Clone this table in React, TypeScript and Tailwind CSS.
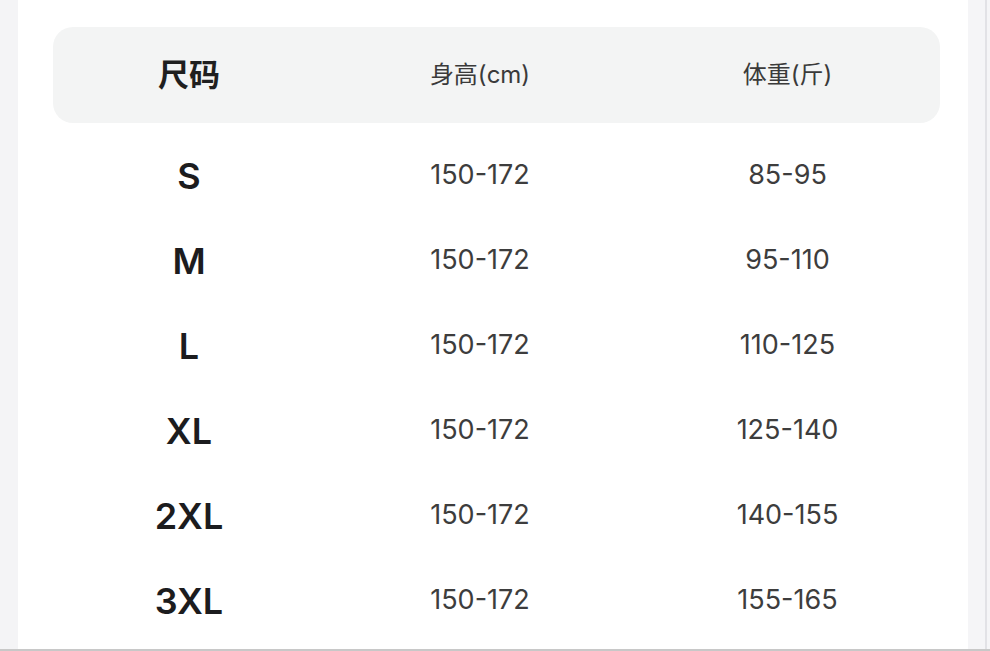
import React from 'react';

const rows = [
  { size: 'S', height: '150-172', weight: '85-95' },
  { size: 'M', height: '150-172', weight: '95-110' },
  { size: 'L', height: '150-172', weight: '110-125' },
  { size: 'XL', height: '150-172', weight: '125-140' },
  { size: '2XL', height: '150-172', weight: '140-155' },
  { size: '3XL', height: '150-172', weight: '155-165' },
];

const cols = 'grid grid-cols-[272px_310px_1fr] items-center text-center';

export default function App() {
  return (
    <div
      className="w-[990px] h-[651px] overflow-hidden flex flex-col bg-white"
      style={{ fontFamily: 'Inter, "Noto Sans CJK SC", sans-serif' }}
    >
      <div className="flex flex-1 min-h-0">
        <div className="w-[18px] bg-[#f4f4f6]" />
        <main className="flex-1 bg-white pl-[35px] pr-[28px] pt-[27px]">
          <div className={`${cols} h-[96px] rounded-[20px] bg-[#f3f4f4]`}>
            <div className="text-[31px] font-bold text-[#1f1f1f]">尺码</div>
            <div className="text-[24px] text-[#3a3a3a]">身高(cm)</div>
            <div className="text-[24px] text-[#3a3a3a]">体重(斤)</div>
          </div>
          <div className="mt-[10px]">
            {rows.map((r) => (
              <div key={r.size} className={`${cols} h-[85px]`}>
                <div className="text-[36px] font-semibold text-[#1c1c1e]">{r.size}</div>
                <div className="text-[27px] text-[#3d3d3d]">{r.height}</div>
                <div className="text-[27px] text-[#3d3d3d]">{r.weight}</div>
              </div>
            ))}
          </div>
        </main>
        <div className="w-[22px] bg-[#f5f5f7] flex justify-end">
          <div className="w-[2px] mr-[3px] bg-[#e2e2e6]" />
        </div>
      </div>
      <div className="h-[2px] bg-[#c8c8c8]" />
    </div>
  );
}
